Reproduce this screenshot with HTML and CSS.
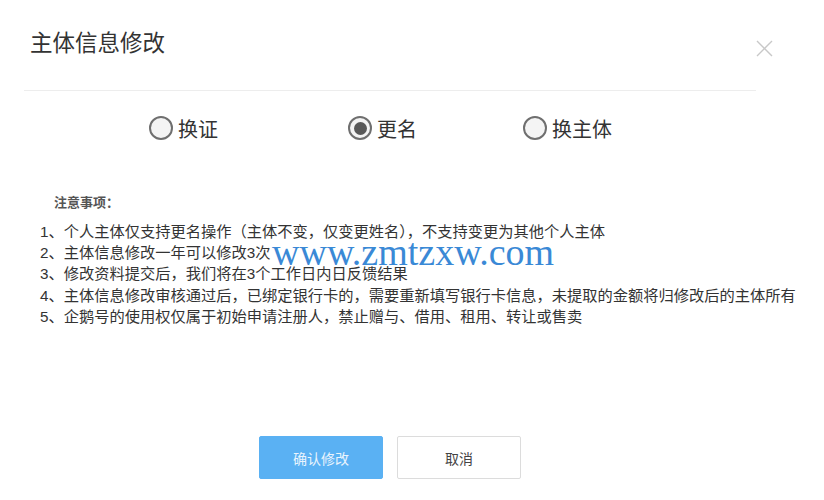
FILE: index.html
```html
<!DOCTYPE html>
<html lang="zh-CN">
<head>
<meta charset="utf-8">
<title>主体信息修改</title>
<link rel="stylesheet" href="styles.css">
</head>
<body>
<div class="dialog">
  <div class="header">
    <div class="head-main"><h1 class="title">主体信息修改</h1></div>
    <button class="close" aria-label="关闭">
      <svg width="17" height="17" viewBox="0 0 17 17"><path d="M1 1L16 16M16 1L1 16" stroke="#c8c8c8" stroke-width="1.4" fill="none"/></svg>
    </button>
  </div>

  <div class="radios">
    <label class="opt opt-1"><span class="radio"></span><span class="opt-text">换证</span></label>
    <label class="opt opt-2"><span class="radio checked"></span><span class="opt-text">更名</span></label>
    <label class="opt opt-3"><span class="radio"></span><span class="opt-text">换主体</span></label>
  </div>

  <div class="notes">
    <div class="notes-title">注意事项：</div>
    <ol class="notes-list">
      <li>1、个人主体仅支持更名操作（主体不变，仅变更姓名），不支持变更为其他个人主体</li>
      <li>2、主体信息修改一年可以修改3次</li>
      <li>3、修改资料提交后，我们将在3个工作日内日反馈结果</li>
      <li>4、主体信息修改审核通过后，已绑定银行卡的，需要重新填写银行卡信息，未提取的金额将归修改后的主体所有</li>
      <li>5、企鹅号的使用权仅属于初始申请注册人，禁止赠与、借用、租用、转让或售卖</li>
    </ol>
    <div class="watermark">www.zmtzxw.com</div>
  </div>

  <div class="actions">
    <button class="btn btn-primary">确认修改</button>
    <button class="btn btn-default">取消</button>
  </div>
</div>
</body>
</html>
```

FILE: styles.css
```css
html, body {
  margin: 0;
  padding: 0;
  background: #ffffff;
}
body {
  width: 824px;
  height: 500px;
  overflow: hidden;
  font-family: "Liberation Sans", "Noto Sans CJK SC", sans-serif;
  color: #333;
}
.dialog {
  position: relative;
  width: 824px;
  height: 500px;
}
.header {
  display: flex;
  align-items: flex-start;
  padding-left: 24px;
}
.head-main {
  width: 732px;
  height: 91px;
  border-bottom: 1px solid #ededed;
  box-sizing: border-box;
}
.title {
  margin: 0;
  padding: 27px 0 0 6px;
  font-size: 22.5px;
  line-height: 28px;
  font-weight: normal;
  color: #333;
  font-family: "Noto Sans CJK SC", sans-serif;
}
.close {
  margin: 40px 0 0 0;
  padding: 0;
  border: 0;
  background: transparent;
  width: 17px;
  height: 17px;
  cursor: pointer;
}
.close svg { display: block; }

.radios {
  display: flex;
  align-items: center;
  height: 72px;
  padding-left: 149px;
  margin-top: 1px;
}
.opt {
  display: flex;
  align-items: center;
  font-family: "Noto Sans CJK SC", sans-serif;
  font-size: 20px;
  color: #333;
}
.opt-2 { margin-left: 130px; }
.opt-3 { margin-left: 106px; }
.radio {
  width: 20px;
  height: 20px;
  border: 2px solid #6f6f6f;
  border-radius: 50%;
  background: #f4f4f4;
  margin-right: 5px;
  display: flex;
  align-items: center;
  justify-content: center;
  box-sizing: content-box;
}
.radio.checked::after {
  content: "";
  width: 13px;
  height: 13px;
  border-radius: 50%;
  background: #595959;
}

.notes {
  position: relative;
  padding-top: 29px;
}
.notes-title {
  padding-left: 54px;
  font-family: "Noto Sans CJK SC", sans-serif;
  font-size: 13px;
  font-weight: bold;
  color: #555;
  line-height: 18px;
}
.notes-list {
  list-style: none;
  margin: 10px 0 0 0;
  padding: 0 0 0 40px;
  font-size: 15.25px;
  line-height: 21.2px;
  color: #333;
  white-space: nowrap;
}
.watermark {
  position: absolute;
  left: 272px;
  top: 68px;
  font-family: "Liberation Serif", serif;
  font-size: 38px;
  line-height: 40px;
  color: #3a89d6;
}

.actions {
  display: flex;
  padding-left: 259px;
  margin-top: 109px;
  gap: 14px;
}
.btn {
  width: 124px;
  height: 43px;
  font-family: "Noto Sans CJK SC", sans-serif;
  font-size: 14px;
  border-radius: 2px;
  cursor: pointer;
  box-sizing: border-box;
}
.btn-primary {
  background: #5ab1f3;
  border: 1px solid #5ab1f3;
  color: #e9f4fd;
}
.btn-default {
  background: #fff;
  border: 1px solid #dcdcdc;
  color: #444;
}
```
